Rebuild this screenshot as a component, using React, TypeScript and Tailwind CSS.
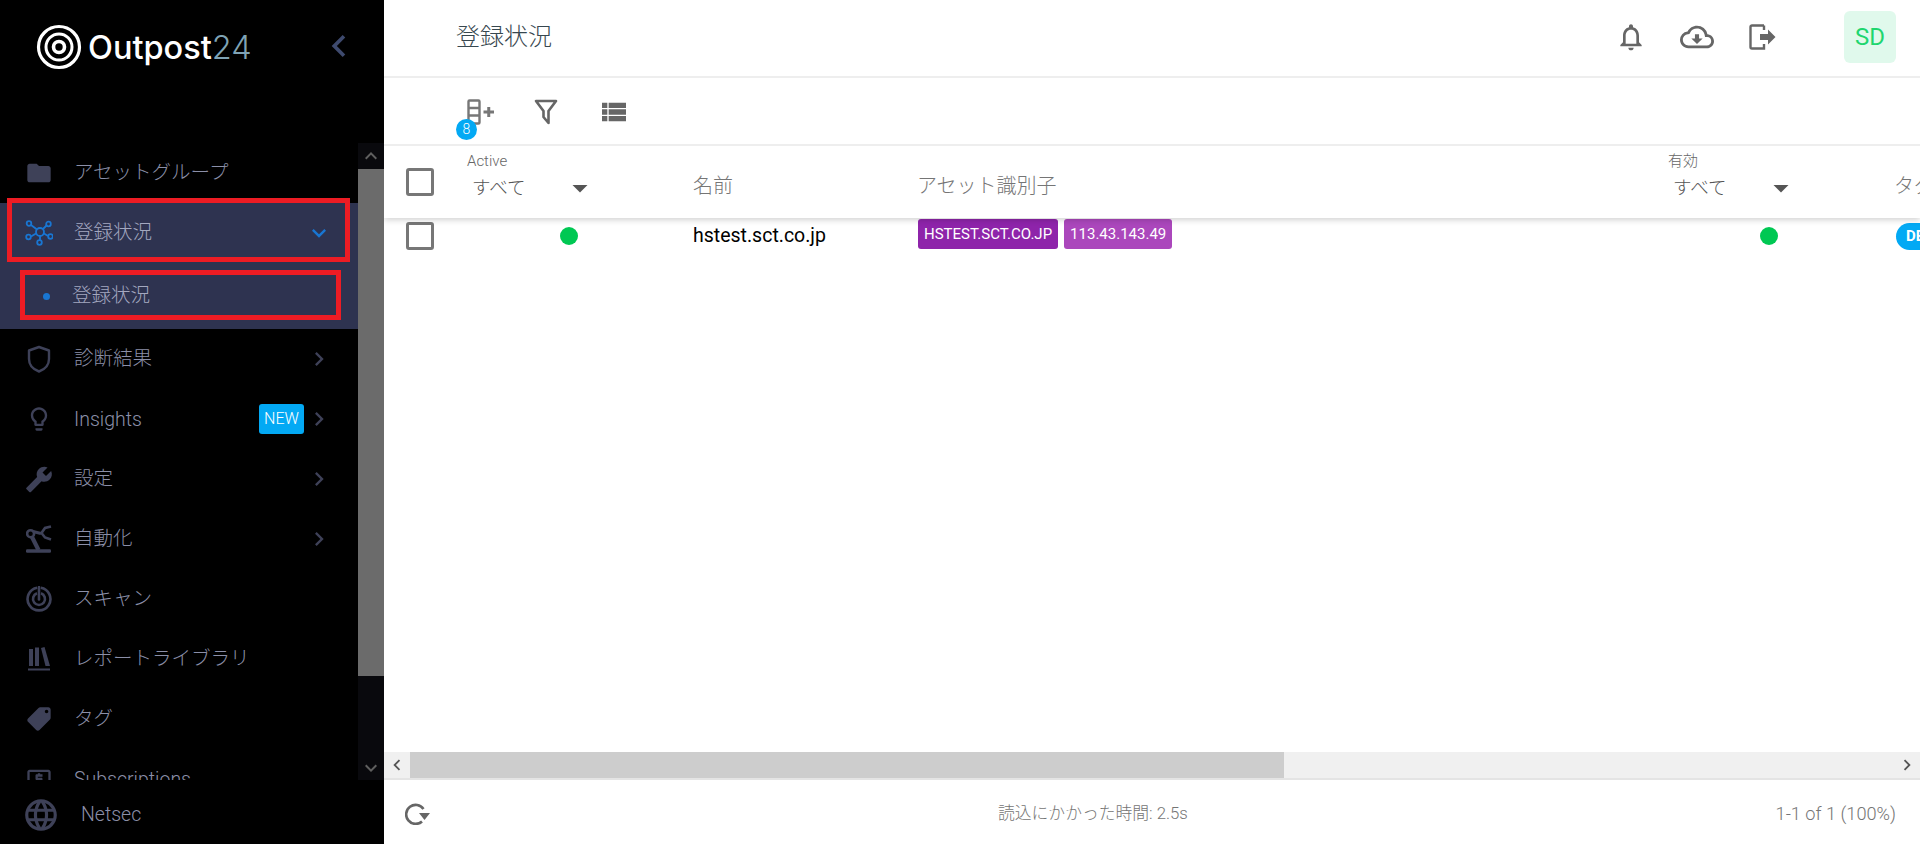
import { ReactNode } from "react";
import {
  MdFolder,
  MdOutlineLightbulb,
  MdBuild,
  MdLocalOffer,
  MdLanguage,
  MdOutlineNotifications,
  MdOutlineCloudDownload,
  MdViewList,
  MdKeyboardArrowRight,
  MdKeyboardArrowDown,
  MdKeyboardArrowUp,
  MdKeyboardArrowLeft,
  MdArrowDropDown,
  MdLocalAtm,
} from "react-icons/md";

const FONT = "font-['Roboto','Noto_Sans_CJK_JP',sans-serif]";

function ShieldIcon() {
  return (
    <svg viewBox="0 0 24 28" className="w-[24px] h-[28px]" fill="none" stroke="currentColor" strokeWidth="2.4">
      <path d="M12 2 L22 5.5 V14 C22 20 17.5 24.5 12 26.5 C6.5 24.5 2 20 2 14 V5.5 Z" strokeLinejoin="round" />
    </svg>
  );
}

function HubIcon() {
  return (
    <svg viewBox="0 0 28 26" className="w-[28px] h-[26px]" fill="none" stroke="currentColor" strokeWidth="1.8">
      <circle cx="15" cy="12" r="4" />
      <circle cx="4" cy="3.5" r="2.3" />
      <circle cx="23.5" cy="4" r="2.3" />
      <circle cx="3.5" cy="17" r="2.3" />
      <circle cx="25.5" cy="16.5" r="2.3" />
      <circle cx="14.5" cy="22.5" r="2.3" />
      <path d="M6 5 L12 9.5 M21.5 5.5 L18 9 M6 16.5 L11 13.5 M23 16 L19 13.5 M15 16 V20" />
    </svg>
  );
}

function RobotArmIcon() {
  return (
    <svg viewBox="0 0 26 29" className="w-[26px] h-[29px]" fill="none" stroke="currentColor" strokeWidth="2.6">
      <circle cx="4.6" cy="8.7" r="3.5" />
      <path d="M6 12 L12.5 25" strokeWidth="4.2" />
      <path d="M7 6.5 L15 8.5" strokeWidth="3" />
      <path d="M25 1.5 L19 3 L15.5 8 L19 12.5 L25 14.5" />
      <rect x="0" y="24.2" width="25" height="3.6" rx="1.2" fill="currentColor" stroke="none" />
    </svg>
  );
}

function ScanIcon() {
  return (
    <svg viewBox="0 0 26 26" className="w-[26px] h-[26px]" fill="none" stroke="currentColor" strokeWidth="2.6">
      <path d="M11.2 1.75 A11.4 11.4 0 1 0 14.8 1.75" />
      <path d="M11 7.35 A6 6 0 1 0 15 7.35" />
      <path d="M13 1 V13.5" strokeLinecap="round" strokeWidth="2.6" />
    </svg>
  );
}

function LibraryIcon() {
  return (
    <svg viewBox="0 0 24 24" className="w-[24px] h-[24px]" fill="currentColor">
      <rect x="2" y="2" width="4" height="17" />
      <rect x="8" y="0.5" width="4" height="18.5" />
      <path d="M14 1 L17.5 0 L23 19 L18.5 19 Z" />
      <rect x="1" y="21.5" width="22" height="2" />
    </svg>
  );
}

function Logo() {
  return (
    <svg viewBox="0 0 46 46" className="w-[46px] h-[46px]" fill="none" stroke="white">
      <circle cx="23" cy="23" r="20.5" strokeWidth="3.2" />
      <circle cx="23" cy="23" r="13" strokeWidth="3" />
      <circle cx="23" cy="23" r="5.5" strokeWidth="3.6" />
    </svg>
  );
}

function NavRow({
  icon,
  label,
  chevron,
  badge,
  latin,
}: {
  icon: ReactNode;
  label: string;
  chevron?: boolean;
  badge?: boolean;
  latin?: boolean;
}) {
  return (
    <div className="h-[60px] shrink-0 flex items-center text-[#3e4158]">
      <div className="w-[78px] pl-[25px] shrink-0 flex justify-start">
        <div className="w-[28px] flex justify-center">{icon}</div>
      </div>
      <span className={`flex-1 text-[19.5px] font-light text-[#8b8fa8] whitespace-nowrap -ml-[4px] ${latin ? "pt-[2px]" : ""}`}>
        {label}
      </span>
      {badge && (
        <span className="w-[45px] h-[30px] mr-[2px] rounded-[3px] bg-[#03a9f4] text-white text-[16px] font-light flex items-center justify-center">
          NEW
        </span>
      )}
      {chevron && <MdKeyboardArrowRight className="w-[28px] h-[28px] mr-[25px] -ml-[1px]" />}
    </div>
  );
}

function Sidebar() {
  return (
    <aside className="relative w-[384px] h-[844px] shrink-0 bg-black flex flex-col">
      <div className="h-[143px] shrink-0 flex items-start pl-[36px] pr-[23px] pt-[24px]">
        <Logo />
        <span className="ml-[6px] pt-[1px] font-['Inter'] font-medium text-[32.5px] leading-[46px] text-white">
          Outpost<span className="text-[#7fa3b5] font-light">24</span>
        </span>
        <MdKeyboardArrowLeft className="ml-auto w-[44px] h-[44px] text-[#3e4a6e]" />
      </div>

      <div className="h-[637px] shrink-0 flex">
        <nav className="flex-1 overflow-hidden flex flex-col">
          <NavRow icon={<MdFolder className="w-[30px] h-[30px]" />} label="アセットグループ" />
          <div className="h-[126px] shrink-0 bg-[#2e3350] flex flex-col">
            <div className="h-[60px] flex items-center">
              <div className="w-[78px] pl-[25px] shrink-0 text-[#1976d2]">
                <HubIcon />
              </div>
              <span className="flex-1 text-[19.5px] font-light text-[#a4a8c0] -ml-[4px]">登録状況</span>
              <MdKeyboardArrowDown className="w-[28px] h-[28px] mr-[25px] text-[#1976d2]" />
            </div>
            <div className="h-[66px] flex items-center">
              <span className="w-[7px] h-[7px] ml-[43px] rounded-full bg-[#1976d2]" />
              <span className="ml-[22px] text-[19.5px] font-light text-[#a4a8c0]">登録状況</span>
            </div>
          </div>
          <NavRow icon={<ShieldIcon />} label="診断結果" chevron />
          <NavRow icon={<MdOutlineLightbulb className="w-[30px] h-[30px]" />} label="Insights" chevron badge latin />
          <NavRow icon={<MdBuild className="w-[31px] h-[31px] -scale-x-100" />} label="設定" chevron />
          <NavRow icon={<RobotArmIcon />} label="自動化" chevron />
          <NavRow icon={<ScanIcon />} label="スキャン" />
          <NavRow icon={<LibraryIcon />} label="レポートライブラリ" />
          <NavRow icon={<MdLocalOffer className="w-[28px] h-[28px] -scale-x-100" />} label="タグ" />
          <NavRow icon={<MdLocalAtm className="w-[28px] h-[28px]" />} label="Subscriptions" latin />
        </nav>
        <div className="w-[26px] shrink-0 flex flex-col bg-[#09090d] text-[#5f5f5f]">
          <div className="h-[26px] flex items-center justify-center">
            <MdKeyboardArrowUp className="w-[24px] h-[24px]" />
          </div>
          <div className="h-[507px] bg-[#6b6b6b]" />
          <div className="flex-1" />
          <div className="h-[25px] flex items-center justify-center">
            <MdKeyboardArrowDown className="w-[24px] h-[24px]" />
          </div>
        </div>
      </div>

      <div className="flex-1 flex items-center pl-[22px] pt-[6px] text-[#3e4158]">
        <MdLanguage className="w-[38px] h-[38px]" />
        <span className="ml-[21px] text-[19.5px] font-light text-[#8b8fa8]">Netsec</span>
      </div>

      {/* red annotation boxes from the screenshot */}
      <div className="absolute left-[7px] top-[198px] w-[343px] h-[64px] border-[5px] border-[#ed1c24]" />
      <div className="absolute left-[20px] top-[270px] w-[321px] h-[50px] border-[5px] border-[#ed1c24]" />
    </aside>
  );
}

function Checkbox() {
  return <div className="ml-[22px] w-[28px] h-[28px] rounded-[3px] border-[3px] border-[#777]" />;
}

function SelectCell({ label }: { label: string }) {
  return (
    <div className="self-start flex flex-col pt-[5px]">
      <span className="text-[15px] font-light leading-[20px] text-[#666]">{label}</span>
      <div className="flex items-center w-[125px] ml-[5px] -mt-[1px] text-[#555]">
        <span className="flex-1 text-[18.5px] font-light leading-[30px]">すべて</span>
        <MdArrowDropDown className="w-[36px] h-[36px] -mr-[1px]" />
      </div>
    </div>
  );
}

function ColumnPlusIcon() {
  return (
    <svg viewBox="0 0 28 26" className="w-[28px] h-[26px]" fill="none" stroke="#777" strokeWidth="2.4">
      <rect x="1.5" y="1.5" width="11" height="23" rx="1" />
      <path d="M1.5 9 H12.5 M1.5 16.5 H12.5" />
      <path d="M16.5 13 H27 M21.75 8 V18" strokeWidth="3" />
    </svg>
  );
}

function FilterIcon() {
  return (
    <svg viewBox="0 0 24 26" className="w-[24px] h-[26px]" fill="none" stroke="#666" strokeWidth="2.6" strokeLinejoin="round">
      <path d="M2 2 H22 L14.5 12 V24 L9.5 18 V12 Z" />
    </svg>
  );
}

function LogoutIcon() {
  return (
    <svg viewBox="0 0 28 26" className="w-[28px] h-[26px]" fill="none" stroke="#666" strokeWidth="2.4">
      <path d="M15 1.5 H3 A1.5 1.5 0 0 0 1.5 3 V23 A1.5 1.5 0 0 0 3 24.5 H15 V20" />
      <path d="M15 1.5 V6" />
      <path d="M11 10 H19 V5.5 L26.5 13 L19 20.5 V16 H11 Z" fill="#666" stroke="none" />
    </svg>
  );
}

function RefreshIcon() {
  return (
    <svg viewBox="0 0 25 22" className="w-[25px] h-[22px]" fill="none" stroke="#666" strokeWidth="2.6">
      <path d="M18.5 6 A9.5 9.5 0 1 0 17 18.5" />
      <path d="M14 10 H25 L19.5 17 Z" fill="#666" stroke="none" />
    </svg>
  );
}

const GRID = "grid grid-cols-[83px_226px_224px_751px_226px_200px] w-[1710px]";

function Main() {
  return (
    <main className="flex-1 min-w-0 h-[844px] flex flex-col bg-white">
      <header className="h-[78px] shrink-0 border-b-2 border-[#eee] flex items-center pl-[72px] pr-[24px] pb-[3px]">
        <h1 className="text-[24px] font-light text-[#37474f]">登録状況</h1>
        <div className="ml-auto flex items-center text-[#666]">
          <MdOutlineNotifications className="w-[32px] h-[32px] mr-[33px]" />
          <MdOutlineCloudDownload className="w-[34px] h-[34px] mr-[35px]" />
          <LogoutIcon />
          <div className="ml-[67px] w-[52px] h-[52px] rounded-[6px] bg-[#e0f9ec] text-[#1ed66f] text-[24px] flex items-center justify-center">
            SD
          </div>
        </div>
      </header>

      <div className="h-[68px] shrink-0 border-b-2 border-[#eee] flex items-center pl-[83px] pt-[2px]">
        <div className="relative">
          <ColumnPlusIcon />
          <span className="absolute -left-[11px] top-[20px] w-[21px] h-[21px] rounded-full bg-[#03a9f4] text-white text-[14px] font-light flex items-center justify-center">
            8
          </span>
        </div>
        <div className="ml-[39px]">
          <FilterIcon />
        </div>
        <MdViewList className="ml-[40px] w-[32px] h-[32px] text-[#666]" />
      </div>

      <div className="flex-1 min-h-0 overflow-hidden flex flex-col">
        <div className={`${GRID} relative z-10 h-[72px] shrink-0 items-center bg-white`}>
          <Checkbox />
          <SelectCell label="Active" />
          <span className="pt-[8px] text-[20px] font-light text-[#757575]">名前</span>
          <span className="pt-[8px] text-[20px] font-light text-[#757575]">アセット識別子</span>
          <SelectCell label="有効" />
          <span className="pt-[8px] text-[20px] font-light text-[#757575]">タグ</span>
        </div>
        <div className="h-[72px] -mt-[72px] shrink-0 relative z-10 shadow-[0_2px_6px_rgba(0,0,0,0.18)] pointer-events-none" />
        <div className={`${GRID} pt-[1px] items-start`}>
          <div className="pt-[3px]">
            <Checkbox />
          </div>
          <div className="h-[34px] flex items-center pl-[93px]">
            <span className="w-[18px] h-[18px] rounded-full bg-[#00c853]" />
          </div>
          <span className="h-[34px] flex items-center text-[19.5px] text-black">hstest.sct.co.jp</span>
          <div className="flex gap-[6px] pl-[1px]">
            <span className="h-[30px] px-[6px] rounded-[3px] bg-[#8e24aa] text-white text-[15px] flex items-center">
              HSTEST.SCT.CO.JP
            </span>
            <span className="h-[30px] px-[6px] rounded-[3px] bg-[#ab47bc] text-white text-[15px] flex items-center">
              113.43.143.49
            </span>
          </div>
          <div className="h-[34px] flex items-center pl-[92px]">
            <span className="w-[18px] h-[18px] rounded-full bg-[#00c853]" />
          </div>
          <div className="pt-[4px] pl-[2px]">
            <span className="inline-block h-[27px] w-[60px] pl-[10px] rounded-full bg-[#03a9f4] text-white text-[15px] font-bold leading-[27px]">
              DEFAULT
            </span>
          </div>
        </div>
      </div>

      <div className="h-[26px] shrink-0 bg-[#f0f0f0] flex items-center text-[#555] border-b-2 border-[#e4e4e4] box-content">
        <div className="w-[26px] flex justify-center">
          <MdKeyboardArrowLeft className="w-[22px] h-[22px]" />
        </div>
        <div className="w-[874px] h-full bg-[#cdcdcd]" />
        <div className="flex-1" />
        <div className="w-[26px] flex justify-center">
          <MdKeyboardArrowRight className="w-[22px] h-[22px]" />
        </div>
      </div>

      <footer className="h-[64px] shrink-0 flex items-center pl-[21px] pr-[24px] pt-[4px] font-light text-[#757575]">
        <div className="w-[200px]">
          <RefreshIcon />
        </div>
        <span className="ml-[393px] text-[16.8px]">読込にかかった時間: 2.5s</span>
        <span className="ml-auto text-[18.2px]">1-1 of 1 (100%)</span>
      </footer>
    </main>
  );
}

export default function App() {
  return (
    <div className={`${FONT} flex w-[1920px] h-[844px] overflow-hidden`}>
      <Sidebar />
      <Main />
    </div>
  );
}
